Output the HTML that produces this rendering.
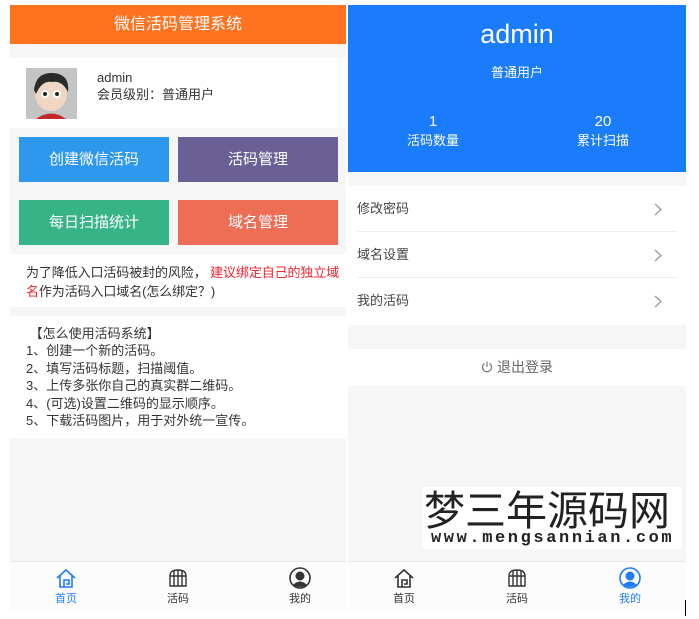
<!DOCTYPE html>
<html><head><meta charset="utf-8"><style>
*{margin:0;padding:0;box-sizing:border-box}
body{width:699px;height:619px;background:#fff;position:relative;overflow:hidden;font-family:"Liberation Sans","Noto Sans CJK SC",sans-serif;color:#333}
.a{position:absolute}
.btn{position:absolute;color:#fff;font-size:15px;text-align:center;line-height:45px}
.row{position:absolute;left:357px;width:321px;height:46px;line-height:46px;font-size:13px;color:#444}
.row svg{position:absolute;right:16px;top:17px}
.nav{position:absolute;top:561px;height:49px;background:#fcfcfc;border-top:1px solid #e5e5e5}
.ni{position:absolute;top:5px;width:60px;text-align:center;font-size:11px;color:#333}
.ni svg{display:block;margin:0 auto 1px}
</style></head><body>
<div class="a" style="left:10px;top:5px;width:336px;height:605px;background:#f6f6f6"></div>
<div class="a" style="left:10px;top:5px;width:336px;height:39px;background:#ff7220;color:#fff;font-size:16px;text-align:center;line-height:39px">微信活码管理系统</div>
<div class="a" style="left:10px;top:58px;width:336px;height:70px;background:#fff"></div>
<div class="a" style="left:26px;top:68px;width:51px;height:51px;background:#b9b9b9;overflow:hidden">
<svg width="51" height="51"><rect width="51" height="51" fill="#c4c4c4"/><ellipse cx="25" cy="26" rx="16" ry="17" fill="#f2d6c4"/><path d="M8 22 Q10 4 27 5 Q44 6 42 24 Q36 12 26 14 Q16 12 10 26Z" fill="#2a2a2a"/><circle cx="19" cy="26" r="4" fill="#fff"/><circle cx="31" cy="26" r="4" fill="#fff"/><circle cx="19" cy="26" r="2" fill="#222"/><circle cx="31" cy="26" r="2" fill="#222"/><path d="M10 51 Q25 40 40 51Z" fill="#c4282a"/></svg></div>
<div class="a" style="left:97px;top:69px;font-size:13px;line-height:17px;color:#333">admin<br>会员级别：普通用户</div>
<div class="btn" style="left:19px;top:137px;width:150px;background:#2d98ee">创建微信活码</div>
<div class="btn" style="left:178px;top:137px;width:160px;background:#6a6096">活码管理</div>
<div class="btn" style="left:19px;top:200px;width:150px;background:#37b487">每日扫描统计</div>
<div class="btn" style="left:178px;top:200px;width:160px;background:#ed6e55">域名管理</div>
<div class="a" style="left:10px;top:254px;width:336px;height:53px;background:#fff;padding:9px 0 0 16px;font-size:13px;line-height:19px;color:#333;letter-spacing:-0.1px">为了降低入口活码被封的风险， <span style="color:#f0232d">建议绑定自己的独立域名</span>作为活码入口域名(怎么绑定？)</div>
<div class="a" style="left:10px;top:316px;width:336px;height:122px;background:#fff;padding:9px 16px 0 16px;font-size:13px;line-height:17.4px;color:#333">&nbsp;【怎么使用活码系统】<br>1、创建一个新的活码。<br>2、填写活码标题，扫描阈值。<br>3、上传多张你自己的真实群二维码。<br>4、(可选)设置二维码的显示顺序。<br>5、下载活码图片，用于对外统一宣传。</div>
<div class="nav" style="left:10px;width:336px">
<div class="ni" style="left:26px;color:#1e7cf5"><svg width="22" height="22" viewBox="0 0 22 22" fill="none" stroke="#1e7cf5" stroke-width="1.6"><path d="M2 11 L11 3 L20 11 M5 9 V20 H17 V9 M9 20 V13 H14 V17 H11"/></svg>首页</div>
<div class="ni" style="left:138px"><svg width="22" height="22" viewBox="0 0 22 22" fill="none" stroke="#333" stroke-width="1.4"><path d="M3 9 Q3 3 11 3 Q19 3 19 9 V19 H3Z M3 9 H19 M7 4 V19 M11 3 V19 M15 4 V19"/></svg>活码</div>
<div class="ni" style="left:260px"><svg width="22" height="22" viewBox="0 0 22 22"><circle cx="11" cy="11" r="10" fill="none" stroke="#333" stroke-width="1.6"/><circle cx="11" cy="9" r="4.5" fill="#333"/><path d="M4 18 Q11 11 18 18 Q11 22 4 18Z" fill="#333"/></svg>我的</div>
</div>
<div class="a" style="left:348px;top:5px;width:338px;height:605px;background:#f6f6f6"></div>
<div class="a" style="left:348px;top:5px;width:338px;height:167px;background:#1a7cfa;color:#fff;text-align:center">
<div style="position:absolute;top:14px;width:100%;font-size:27px">admin</div>
<div style="position:absolute;top:57px;width:100%;font-size:13px">普通用户</div>
<div style="position:absolute;top:107px;left:35px;width:100px;font-size:15px;line-height:19px">1<br><span style="font-size:13px">活码数量</span></div>
<div style="position:absolute;top:107px;left:205px;width:100px;font-size:15px;line-height:19px">20<br><span style="font-size:13px">累计扫描</span></div>
</div>
<div class="a" style="left:348px;top:186px;width:338px;height:139px;background:#fff"></div>
<div class="row" style="top:186px;border-bottom:1px solid #eee">修改密码<svg width="8" height="13" viewBox="0 0 8 13" fill="none" stroke="#999" stroke-width="1.3"><path d="M1 1 L7 6.5 L1 12"/></svg></div>
<div class="row" style="top:232px;border-bottom:1px solid #eee">域名设置<svg width="8" height="13" viewBox="0 0 8 13" fill="none" stroke="#999" stroke-width="1.3"><path d="M1 1 L7 6.5 L1 12"/></svg></div>
<div class="row" style="top:278px">我的活码<svg width="8" height="13" viewBox="0 0 8 13" fill="none" stroke="#999" stroke-width="1.3"><path d="M1 1 L7 6.5 L1 12"/></svg></div>
<div class="a" style="left:348px;top:349px;width:338px;height:37px;background:#fff;text-align:center;line-height:37px;font-size:14px;color:#666"><svg width="12" height="12" viewBox="0 0 12 12" fill="none" stroke="#777" stroke-width="1.2" style="vertical-align:-1px;margin-right:4px"><path d="M3.5 2.5 A4.5 4.5 0 1 0 8.5 2.5 M6 0.5 V6"/></svg>退出登录</div>
<div class="a" style="left:422px;top:487px;width:260px;height:62px;background:#fff;color:#222;overflow:hidden">
<div style="position:absolute;left:2px;top:-9px;font-size:41px;line-height:58px;font-family:'Noto Sans CJK SC',sans-serif;white-space:nowrap;letter-spacing:0">梦三年源码网</div>
<div style="position:absolute;left:9px;top:44px;font-family:'Liberation Mono',monospace;font-size:17px;font-weight:bold;letter-spacing:2.6px;white-space:nowrap;line-height:16px">www.mengsannian.com</div>
</div>
<div class="nav" style="left:348px;width:338px">
<div class="ni" style="left:26px"><svg width="22" height="22" viewBox="0 0 22 22" fill="none" stroke="#333" stroke-width="1.6"><path d="M2 11 L11 3 L20 11 M5 9 V20 H17 V9 M9 20 V13 H14 V17 H11"/></svg>首页</div>
<div class="ni" style="left:139px"><svg width="22" height="22" viewBox="0 0 22 22" fill="none" stroke="#333" stroke-width="1.4"><path d="M3 9 Q3 3 11 3 Q19 3 19 9 V19 H3Z M3 9 H19 M7 4 V19 M11 3 V19 M15 4 V19"/></svg>活码</div>
<div class="ni" style="left:252px;color:#1e7cf5"><svg width="22" height="22" viewBox="0 0 22 22"><circle cx="11" cy="11" r="10" fill="none" stroke="#1e7cf5" stroke-width="1.6"/><circle cx="11" cy="9" r="4.5" fill="#1e7cf5"/><path d="M4 18 Q11 11 18 18 Q11 22 4 18Z" fill="#1e7cf5"/></svg>我的</div>
</div>
<div class="a" style="left:685px;top:600px;width:1px;height:16px;background:#000"></div>
</body></html>
